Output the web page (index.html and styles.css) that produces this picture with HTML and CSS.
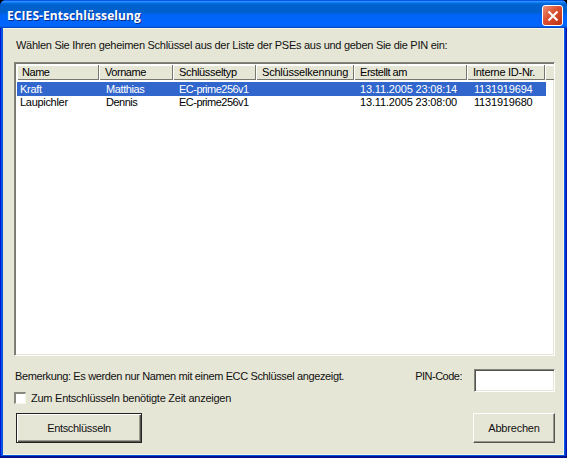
FILE: index.html
```html
<!DOCTYPE html>
<html lang="de">
<head>
<meta charset="utf-8">
<title>ECIES-Entschlüsselung</title>
<link rel="stylesheet" href="styles.css">
</head>
<body>
<div class="window">
  <header class="titlebar">
    <h1 class="title">ECIES-Entschlüsselung</h1>
    <button class="close" aria-label="Schließen"><svg width="12" height="12" viewBox="0 0 12 12"><path d="M1.5 1.5 10.5 10.5M10.5 1.5 1.5 10.5" stroke="#fff" stroke-width="2.1"/></svg></button>
  </header>
  <main class="content">
    <p class="intro"><span class="t-intro">Wählen Sie Ihren geheimen Schlüssel aus der Liste der PSEs aus und geben Sie die PIN ein:</span></p>
    <div class="list">
      <div class="row head">
        <span class="t-name">Name</span><span class="t-vorname">Vorname</span><span class="t-typ">Schlüsseltyp</span><span class="t-kenn">Schlüsselkennung</span><span class="t-erst">Erstellt am</span><span class="t-id">Interne ID-Nr.</span><span></span>
      </div>
      <div class="row selected">
        <span class="t-kraft">Kraft</span><span class="t-matt">Matthias</span><span class="t-ec">EC-prime256v1</span><span></span><span class="t-date">13.11.2005 23:08:14</span><span class="t-num">1131919694</span>
      </div>
      <div class="row">
        <span class="t-laup">Laupichler</span><span class="t-denn">Dennis</span><span class="t-ec">EC-prime256v1</span><span></span><span class="t-date">13.11.2005 23:08:00</span><span class="t-num">1131919680</span>
      </div>
    </div>
    <div class="lower">
      <div class="notes">
        <p class="remark"><span class="t-rem">Bemerkung: Es werden nur Namen mit einem ECC Schlüssel angezeigt.</span></p>
        <label class="check"><i class="box"></i><span class="t-check">Zum Entschlüsseln benötigte Zeit anzeigen</span></label>
      </div>
      <label class="pin"><span class="t-pin">PIN-Code:</span><input class="field" type="text"></label>
    </div>
    <div class="actions">
      <button class="btn default"><span class="t-ent">Entschlüsseln</span></button>
      <button class="btn"><span class="t-abb">Abbrechen</span></button>
    </div>
  </main>
</div>
</body>
</html>
```
FILE: styles.css
```css
* { box-sizing: border-box; }
body { margin: 0; background: #000; overflow: hidden; }
p, h1 { margin: 0; }
button { padding: 0; margin: 0; border-radius: 0; font: inherit; color: inherit; }
.window {
  width: 567px; height: 458px; padding: 0 3px 3px;
  border-radius: 6px 6px 0 0;
  background: linear-gradient(90deg, #0019cf 0 1px, #0a52e8 1px 2px, #0855dd 2px 564px, #0a52e8 564px 565px, #0019b0 566px);
  box-shadow: inset 0 -2px #00138c;
  font: 11px/14px "Liberation Sans", Arial, sans-serif; color: #111;
  white-space: nowrap;
}
.titlebar {
  height: 28px; margin: 0 -3px; padding: 5px 4px 0 7px;
  display: flex; justify-content: space-between;
  border-radius: 6px 6px 0 0;
  background: linear-gradient(#0058e6 0, #0058e6 1px, #3a93ff 1px, #2888fa 2px, #0070e8 3px, #0060cc 5px, #0060cc 12px, #0064f8 15px, #0066ff 26px, #0054dc 27px, #0040b8 28px);
}
.title {
  font: bold 12px/21px "Open Sans", "Noto Sans", sans-serif;
  letter-spacing: .08px;
  color: #fff; text-shadow: 1px 1px #0a2f8c;
}
.close {
  width: 21px; height: 21px; border: 1px solid #fff; border-radius: 3px;
  display: grid; place-items: center;
  background: linear-gradient(135deg, #ec9077, #dc5030 45%, #b93312);
}
.content {
  height: 427px; padding: 9px 8px 0 11px;
  background: #e6e6d6;
  border: solid #f8f8e6; border-width: 1px 1px 1px 0;
}
.intro { height: 24px; padding-left: 2px; }
.list {
  width: 541px; height: 294px; background: #fff;
  border: 1px solid; border-color: #84847c #fff #fff #84847c;
  box-shadow: inset 1px 1px #77776f, inset -1px -1px #e6e6d6;
  padding: 2px 2px 1px;
}
.row {
  display: grid; grid-template-columns: 86px 73px 84px 97px 114px 75px;
  width: 529px; height: 14px; line-height: 14px; color: #000;
}
.row > span { padding-left: 3px; }
.row:last-child { line-height: 13px; }
.head {
  grid-template-columns: 82px 74px 83px 98px 113px 78px 9px;
  width: 537px; height: 15px; margin-bottom: 2px; line-height: 15px;
  background: #e6e6d6; border-bottom: 1px solid #77776f;
}
.head > span {
  padding-left: 6px; border-right: 1px solid #77776f;
  box-shadow: inset 1px 1px #fff;
}
.head > span:first-child { padding-left: 5px; }
.head > span:last-child { border: 0; }
.selected { color: #fff; background: #3166cc; }
.lower { display: flex; justify-content: space-between; height: 57px; padding-top: 13px; }
.remark { padding-left: 1px; }
.check { display: flex; align-items: center; height: 14px; margin-top: 8px; gap: 5px; }
.box {
  width: 12px; height: 12px; background: #fff;
  border: solid; border-width: 2px 1px 1px 2px; border-color: #88887f #f5f5ec #f5f5ec #88887f;
}
.pin { display: flex; gap: 12px; }
.field {
  width: 81px; height: 23px; padding: 2px 4px; background: #fff;
  border: 1px solid; border-color: #84847c #fff #fff #84847c;
  box-shadow: inset 1px 1px #55554f, inset -1px -1px #e6e6d6; outline: 0;
}
.actions { display: flex; justify-content: space-between; padding-left: 2px; }
.btn {
  width: 82px; height: 30px; background: #e6e6d6;
  border: 1px solid; border-color: #fff #55554f #55554f #fff;
  box-shadow: inset -1px -1px #99998f;
}
.default {
  width: 126px; border-color: #222;
  box-shadow: inset 1px 1px #fff, inset -1px -1px #55554f, inset -2px -2px #99998f;
}

.t-intro { letter-spacing: -.28px; }
.t-name, .t-vorname { letter-spacing: -.45px; }
.t-typ { letter-spacing: -.33px; }
.t-kenn { letter-spacing: -.2px; }
.t-erst { letter-spacing: -.45px; }
.t-id { letter-spacing: -.28px; }
.t-kraft, .t-laup { letter-spacing: -.3px; }
.t-matt { letter-spacing: -.4px; }
.t-denn { letter-spacing: -.5px; }
.t-ec { letter-spacing: -.52px; }
.t-date { letter-spacing: -.16px; }
.t-num { letter-spacing: -.18px; }
.t-rem { letter-spacing: -.365px; }
.t-check { letter-spacing: -.25px; }
.t-pin { letter-spacing: -.5px; }
.t-ent { letter-spacing: -.32px; }
.t-abb { letter-spacing: -.2px; }
```
